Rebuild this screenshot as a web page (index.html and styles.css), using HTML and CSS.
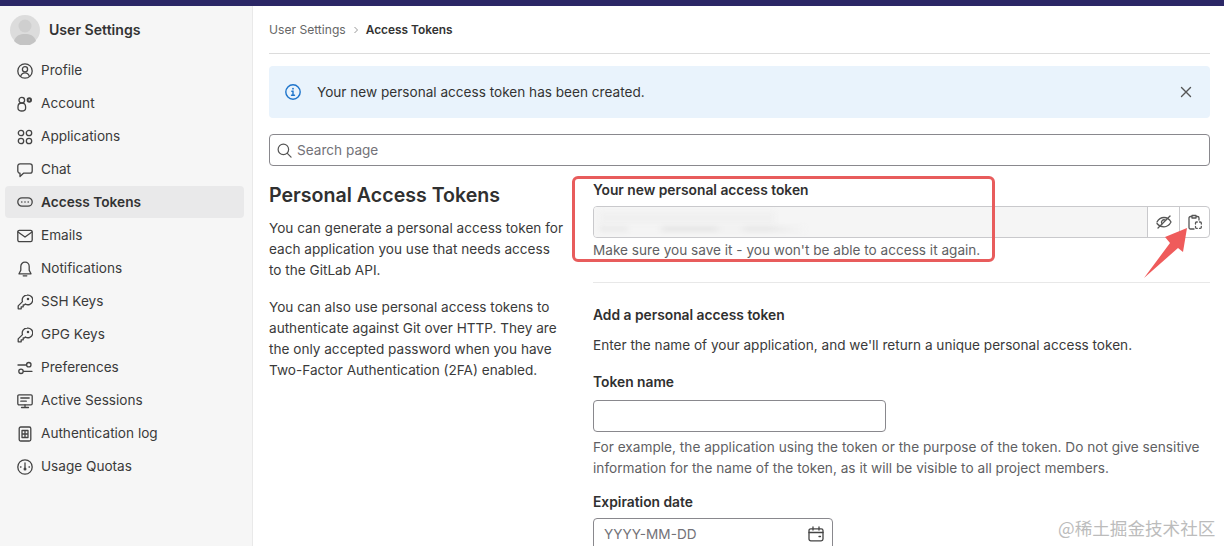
FILE: index.html
```html
<!DOCTYPE html>
<html lang="en">
<head>
<meta charset="utf-8">
<title>Access Tokens</title>
<link rel="stylesheet" href="styles.css">
</head>
<body>
<div class="topbar"></div>
<div class="shell">
  <aside class="sidebar">
    <div class="side-head">
      <svg class="avatar" viewBox="0 0 30 30"><circle cx="15" cy="15" r="15" fill="#dcdcdc"/><circle cx="15" cy="11" r="6.5" fill="#cfcfcf"/><path d="M4 26c2-6 6-7 11-7s9 1 11 7a15 15 0 0 1-22 0z" fill="#c4c4c4"/></svg>
      <span>User Settings</span>
    </div>
    <nav class="nav">
      <a class="nav-item"><svg class="ico" viewBox="0 0 16 16"><circle cx="8" cy="8" r="7.2"/><circle cx="8" cy="6.300" r="2.600"/><path d="M3.600 13.400c.8-2.400 2.400-3.500 4.400-3.500s3.600 1.100 4.400 3.500"/></svg>Profile</a>
      <a class="nav-item"><svg class="ico" viewBox="0 0 16 16"><circle cx="4.800" cy="4.200" r="2.800"/><path d="M4.800 7c-2.400 0-3.800 1.600-3.800 3.800v1.400C1 13.800 2.500 15 4.800 15s3.800-1.200 3.800-2.800v-1.400C8.600 8.600 7.200 7 4.800 7z"/><circle class="fill" cx="12.300" cy="4" r="2.700"/><circle class="hole" cx="12.300" cy="4" r=".8"/></svg>Account</a>
      <a class="nav-item"><svg class="ico" viewBox="0 0 16 16"><circle cx="4" cy="4" r="2.700"/><circle cx="12" cy="4" r="2.700"/><circle cx="4" cy="12" r="2.700"/><circle cx="12" cy="12" r="2.700"/></svg>Applications</a>
      <a class="nav-item"><svg class="ico" viewBox="0 0 16 16"><path d="M3 1.800h10a2.200 2.200 0 0 1 2.200 2.200v5a2.200 2.200 0 0 1-2.200 2.200H6.500L3 14.500v-3.300A2.200 2.200 0 0 1 .8 9V4A2.200 2.200 0 0 1 3 1.800z"/></svg>Chat</a>
      <a class="nav-item active"><svg class="ico" viewBox="0 0 16 16"><rect x=".8" y="3.800" width="14.400" height="8.400" rx="4.200"/><path class="dots" d="M4.800 8h.01M8 8h.01M11.200 8h.01"/></svg>Access Tokens</a>
      <a class="nav-item"><svg class="ico" viewBox="0 0 16 16"><rect x=".8" y="2.300" width="14.400" height="11.400" rx="1.600"/><path d="M1 4l7 5 7-5"/></svg>Emails</a>
      <a class="nav-item"><svg class="ico" viewBox="0 0 16 16"><path d="M8 1.200c-2.600 0-4.200 1.900-4.200 4.300v3.700L2 12.800h12l-1.800-3.600V5.500c0-2.400-1.600-4.300-4.200-4.300zM6.200 14.800h3.600"/></svg>Notifications</a>
      <a class="nav-item"><svg class="ico" viewBox="0 0 16 16"><path d="M10 1.200a4.800 4.800 0 0 0-4.500 6.400L1.200 11.900v2.900h3v-2h2v-2h1.400l.8-.8A4.800 4.800 0 1 0 10 1.200z"/><circle cx="11" cy="5" r=".6"/></svg>SSH Keys</a>
      <a class="nav-item"><svg class="ico" viewBox="0 0 16 16"><path d="M10 1.200a4.800 4.800 0 0 0-4.500 6.400L1.200 11.900v2.900h3v-2h2v-2h1.400l.8-.8A4.800 4.800 0 1 0 10 1.200z"/><circle cx="11" cy="5" r=".6"/></svg>GPG Keys</a>
      <a class="nav-item"><svg class="ico" viewBox="0 0 16 16"><circle cx="11.800" cy="4.700" r="2.200"/><circle cx="4" cy="11.300" r="2.200"/><path d="M1 5h8.500M6.500 11.300H15"/></svg>Preferences</a>
      <a class="nav-item"><svg class="ico" viewBox="0 0 16 16"><rect x=".8" y="1.800" width="14.400" height="10" rx="1.200"/><path d="M8 12v2.400M4.500 14.500h7M3.800 5h8.400M3.800 8.200h5.500"/></svg>Active Sessions</a>
      <a class="nav-item"><svg class="ico" viewBox="0 0 16 16"><rect x="2.200" y="1" width="11.600" height="14" rx="1.500"/><path d="M5 4.500h6v7H5zM5 8h6M8 4.500v7"/></svg>Authentication log</a>
      <a class="nav-item"><svg class="ico" viewBox="0 0 16 16"><circle cx="8" cy="8" r="7.200"/><path d="M8 4v5"/><circle class="solid" cx="8" cy="10" r="1.500"/><path d="M3.500 8h.5M12 8h.5"/></svg>Usage Quotas</a>
    </nav>
  </aside>
  <main class="main">
    <div class="crumbs"><span>User Settings</span><svg class="chev" viewBox="0 0 8 8"><path d="M2.500 1l3 3-3 3"/></svg><b>Access Tokens</b></div>
    <div class="alert">
      <svg class="alert-ico" viewBox="0 0 16 16"><circle cx="8" cy="8" r="7.200"/><path d="M6.800 7.300H8v4M6.500 11.300h3"/><circle class="solid" cx="8" cy="4.700" r=".9"/></svg>
      <span class="alert-text">Your new personal access token has been created.</span>
      <svg class="alert-x" viewBox="0 0 12 12"><path d="M1.500 1.500l9 9M10.500 1.500l-9 9"/></svg>
    </div>
    <div class="search">
      <svg class="search-ico" viewBox="0 0 16 16"><circle cx="6.800" cy="6.800" r="5.600"/><path d="M11 11l4 4"/></svg>
      <span>Search page</span>
    </div>
    <div class="cols">
      <section class="intro">
        <h1>Personal Access Tokens</h1>
        <p>You can generate a personal access token for each application you use that needs access to the GitLab API.</p>
        <p>You can also use personal access tokens to authenticate against Git over HTTP. They are the only accepted password when you have Two-Factor Authentication (2FA) enabled.</p>
      </section>
      <section class="form">
        <label class="lbl new-lbl">Your new personal access token</label>
        <div class="token-group">
          <div class="token-field"><span class="blur-a"></span><span class="blur-b"></span></div>
          <div class="token-btn"><svg class="ico" viewBox="0 0 16 16"><path d="M1 9.500S3.500 12.800 8 12.800 15 8 15 8 12.500 3.500 8 3.500 1 8 1 8"/><path d="M6 9.800a2.500 2.500 0 0 1 3.500-3.500"/><path d="M14 2L2 14"/></svg></div>
          <div class="token-btn narrow"><svg class="ico" viewBox="0 0 16 16"><path d="M7 15H3.500A1.500 1.500 0 0 1 2 13.500V4a1.500 1.500 0 0 1 1.500-1.500H5M9 2.500h1.500A1.500 1.500 0 0 1 12 4v2M5 1.500h4v2.500H5z"/><path d="M8.500 10V9a1 1 0 0 1 1-1h.8M12.500 8h.8a1 1 0 0 1 1 1v1M14.300 12.500v.8a1 1 0 0 1-1 1h-.8M10.300 14.300h-.8a1 1 0 0 1-1-1v-.8"/></svg></div>
        </div>
        <div class="hint first-hint">Make sure you save it - you won't be able to access it again.</div>
        <hr class="rule">
        <h2 class="lbl">Add a personal access token</h2>
        <p class="lead">Enter the name of your application, and we'll return a unique personal access token.</p>
        <label class="lbl name-lbl">Token name</label>
        <div class="input name-input"></div>
        <div class="hint name-hint">For example, the application using the token or the purpose of the token. Do not give sensitive information for the name of the token, as it will be visible to all project members.</div>
        <label class="lbl date-lbl">Expiration date</label>
        <div class="input date-input"><span>YYYY-MM-DD</span><svg class="ico" viewBox="0 0 16 16"><rect x="1" y="2.800" width="14" height="12" rx="1.800"/><path d="M1 6.500h14M5 1v3M11 1v3M11 10.500h1.500"/></svg></div>
      </section>
    </div>
  </main>
</div>
<div class="red-box"></div>
<svg class="arrow" viewBox="0 0 48 55"><path d="M1 53L27 18 22 12 44 3 40 27 35 23z"/></svg>
<div class="watermark">@稀土掘金技术社区</div>
</body>
</html>
```
FILE: styles.css
```css
* { box-sizing: border-box; }
html, body { margin: 0; height: 100%; overflow: hidden; }
body { background: #fff; color: #303030; font: 13.6px/21px Inter, "Liberation Sans", sans-serif; position: relative; }
.topbar { height: 6px; background: #2b2766; }
.shell { display: flex; height: 540px; }
.sidebar { width: 253px; flex: none; background: #f6f6f6; border-right: 1px solid #e9e9e9; padding: 9px 8px 0 5px; }
.side-head { display: flex; align-items: center; gap: 9px; padding-left: 5px; height: 30px; font-size: 14.1px; font-weight: 600; color: #333; }
.side-head span { padding-bottom: 1px; }
.avatar { width: 30px; height: 30px; flex: none; }
.nav { display: flex; flex-direction: column; margin-top: 9px; }
.nav-item { display: flex; align-items: center; gap: 8px; height: 33px; padding-left: 12px; border-radius: 4px; color: #3a3a3a; }
.nav-item.active { background: #e9e9ea; font-size: 13.7px; font-weight: 600; color: #333; height: 32px; margin-bottom: 1px; }
.ico { width: 16px; height: 16px; flex: none; fill: none; stroke: #444; stroke-width: 1.300; stroke-linecap: round; stroke-linejoin: round; }
.ico .fill { fill: #444; stroke: none; }
.ico .hole { fill: #f6f6f6; stroke: none; }
.ico .dots { stroke-width: 1.600; }
.ico .solid { fill: #444; stroke: none; }
.main { flex: 1; padding: 0 14px 0 16px; min-width: 0; }
.crumbs { height: 48px; display: flex; align-items: center; gap: 6px; border-bottom: 1px solid #dcdcdc; font-size: 12.1px; color: #666; }
.crumbs b { font-size: 11.9px; font-weight: 600; color: #333; }
.chev { width: 8px; height: 8px; fill: none; stroke: #999; stroke-width: 1; }
.alert { margin-top: 12px; height: 52px; background: #e9f3fc; border-radius: 4px; display: flex; align-items: center; padding: 0 16px; color: #333; }
.alert-ico { width: 16px; height: 16px; fill: none; stroke: #1f75cb; stroke-width: 1.400; stroke-linecap: round; flex: none; }
.alert-ico .solid { fill: #1f75cb; stroke: none; }
.alert-text { margin-left: 16px; flex: 1; }
.alert-x { width: 12px; height: 12px; fill: none; stroke: #555; stroke-width: 1.400; stroke-linecap: round; margin-right: 2px; }
.search { margin-top: 16px; height: 32px; border: 1px solid #89888d; border-radius: 4px; display: flex; align-items: center; gap: 5px; padding-left: 7px; color: #737278; }
.search-ico { width: 15px; height: 15px; fill: none; stroke: #555; stroke-width: 1.300; stroke-linecap: round; }
.cols { display: flex; gap: 28px; }
.intro { width: 296px; flex: none; padding-top: 17px; }
.intro h1 { margin: 0 0 11px; font-size: 19.6px; line-height: 24px; font-weight: 600; color: #303030; }
.intro p { margin: 0 0 16px; color: #3a3a3a; }
.form { flex: 1; min-width: 0; padding-top: 14px; }
.lbl { display: block; margin: 0; font-size: 13.8px; line-height: 20px; font-weight: 600; color: #303030; }
.token-group { display: flex; height: 32px; margin-top: 6px; border: 1px solid #c9c9cc; border-radius: 4px; }
.token-field { flex: 1; background: #f5f5f5; position: relative; overflow: hidden; border-radius: 3px 0 0 3px; }
.blur-a, .blur-b { position: absolute; left: 6px; filter: blur(2.5px); }
.blur-a { top: 5px; width: 175px; height: 12px; background: #f0f0f0; }
.blur-b { top: 20px; width: 205px; height: 4px; background: linear-gradient(90deg, #e6e6e6 0 12%, #f2f2f2 15% 28%, #e0e0e0 32% 55%, #efefef 60% 68%, #e2e2e2 72% 82%, #f4f4f4 100%); }
.token-btn { width: 32px; flex: none; display: flex; align-items: center; justify-content: center; border-left: 1px solid #c9c9cc; }
.token-btn.narrow { width: 30px; }
.token-btn .ico { stroke: #555; }
.hint { line-height: 21px; color: #5f5f63; }
.first-hint { margin-top: 2px; }
.rule { border: 0; border-top: 1px solid #e8e8e8; margin: 21px 0 22px; }
.lead { margin: 10px 0 0; color: #3a3a3a; }
.name-lbl { margin-top: 16px; }
.input { width: 293px; height: 32px; border: 1px solid #89888d; border-radius: 4px; background: #fff; }
.name-input { margin-top: 8px; }
.name-hint { margin-top: 5px; font-size: 13.67px; }
.date-lbl { margin-top: 13px; }
.date-input { width: 240px; margin-top: 6px; display: flex; align-items: center; justify-content: space-between; padding: 0 8px 0 10px; color: #737278; }
.red-box { position: absolute; left: 572px; top: 176px; width: 423px; height: 86px; border: 3px solid #e85c5c; border-radius: 6px; }
.arrow { position: absolute; left: 1143px; top: 225px; width: 48px; height: 55px; fill: #ef5b5b; }
.watermark { position: absolute; left: 1058px; top: 517px; font: 17.6px/22px "Noto Sans CJK SC", sans-serif; color: #bcbcbc; }
```
